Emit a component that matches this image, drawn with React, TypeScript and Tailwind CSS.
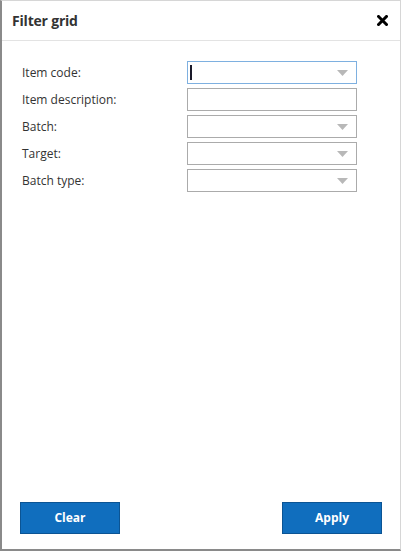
const fields: { label: string; combo: boolean; focused?: boolean }[] = [
  { label: "Item code:", combo: true, focused: true },
  { label: "Item description:", combo: false },
  { label: "Batch:", combo: true },
  { label: "Target:", combo: true },
  { label: "Batch type:", combo: true },
];

function CloseIcon() {
  return (
    <svg width="11" height="11" viewBox="0 0 11 11" aria-hidden>
      <path d="M1.5 1.5 L9.5 9.5 M9.5 1.5 L1.5 9.5" stroke="#000" strokeWidth="3" strokeLinecap="square" />
    </svg>
  );
}

function Caret() {
  return (
    <svg width="11" height="6" viewBox="0 0 11 6" aria-hidden>
      <path d="M0 0 H11 L5.5 6 Z" fill="#b8b8b8" />
    </svg>
  );
}

export default function App() {
  return (
    <div
      className="w-[401px] h-[551px] bg-white flex flex-col border-l-2 border-l-[#8a8a8a] border-t border-t-[#d6d6d6] border-r border-r-[#d6d6d6] border-b-2 border-b-[#8a8a8a] text-[#333]"
      style={{ fontFamily: '"Open Sans", "Noto Sans", sans-serif' }}
    >
      <div className="h-[40px] flex items-center justify-between pl-[10px] pr-[12px] border-b border-[#e3e3e3] shrink-0">
        <h1 className="text-[14px] font-bold text-[#333] tracking-[-0.2px]">Filter grid</h1>
        <button className="flex items-center justify-center">
          <CloseIcon />
        </button>
      </div>

      <div className="flex-1 pt-[20px] pl-[20px] pr-[42px] flex flex-col gap-[4px]">
        {fields.map((f) => (
          <div key={f.label} className="flex items-center h-[23px]">
            <label className="w-[165px] text-[12px] text-[#333]">{f.label}</label>
            <div
              className={
                "w-[170px] h-[23px] border flex items-center justify-between pl-[2px] pr-[8px] bg-white " +
                (f.focused ? "border-[#7eb0e0]" : "border-[#ababab]")
              }
            >
              {f.focused ? <span className="w-[2px] h-[15px] bg-[#1a1a2a]" /> : <span />}
              {f.combo && <Caret />}
            </div>
          </div>
        ))}
      </div>

      <div className="flex justify-between px-[18px] pb-[15px] shrink-0">
        <button className="w-[100px] h-[32px] bg-[#106ebe] border border-[#0b5494] text-white text-[12px] font-bold">
          Clear
        </button>
        <button className="w-[100px] h-[32px] bg-[#106ebe] border border-[#0b5494] text-white text-[12px] font-bold">
          Apply
        </button>
      </div>
    </div>
  );
}
